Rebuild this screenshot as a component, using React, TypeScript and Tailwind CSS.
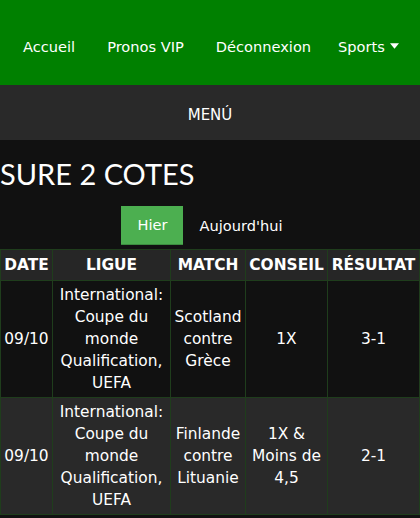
import React from 'react';

type Pick = {
  date: string;
  league: string;
  match: string;
  tip: string;
  result: string;
};

const PICKS: Pick[] = [
  {
    date: '09/10',
    league: 'International: Coupe du monde Qualification, UEFA',
    match: 'Scotland contre Grèce',
    tip: '1X',
    result: '3-1'
  },
  {
    date: '09/10',
    league: 'International: Coupe du monde Qualification, UEFA',
    match: 'Finlande contre Lituanie',
    tip: '1X & Moins de 4,5',
    result: '2-1'
  }
];

const NAV_LINKS = ['Accueil', 'Pronos VIP', 'Déconnexion'];

const CaretDown: React.FC = () => (
  <svg viewBox="0 0 10 6" className="ml-[5px] h-[6px] w-[9px]" aria-hidden="true" fill="currentColor">
    <path d="M0 0h10L5 6z" />
  </svg>
);

const CELL = 'border border-[#1f3d1c] px-[2px] text-center align-middle leading-[22px] text-[15.4px]';

export default function App() {
  return (
    <div className="min-h-[518px] bg-[#111111] text-white font-['DejaVu_Sans',sans-serif] text-[14px]">
      <nav className="flex h-[85px] items-center bg-[#008000] pl-[7px] pt-[8px]">
        {NAV_LINKS.map(link => (
          <a key={link} className="px-4 text-[14.6px]">
            {link}
          </a>
        ))}
        <a className="flex items-center pl-[11px] text-[14.6px]">
          Sports
          <CaretDown />
        </a>
      </nav>

      <div className="flex h-[55px] items-center justify-center bg-[#292929] pt-[6px] text-[15px]">MENÚ</div>

      <h1 className="pt-[14px] font-['Lato',sans-serif] text-[29px] leading-[40px]">SURE 2 COTES</h1>

      <div className="mt-[12px] flex justify-center">
        <button className="h-[39px] border-b border-[#3c8d40] bg-[#4caf50] px-4 text-[14.6px] text-white">Hier</button>
        <button className="h-[39px] px-4 text-[14.6px] text-white">Aujourd'hui</button>
      </div>

      <table className="mt-[4px] w-[419px] table-fixed border-collapse">
        <colgroup>
          <col className="w-[52px]" />
          <col className="w-[118px]" />
          <col className="w-[75px]" />
          <col className="w-[82px]" />
          <col className="w-[92px]" />
        </colgroup>
        <thead>
          <tr className="bg-[#262626] font-bold">
            <th className={`${CELL} py-1`}>DATE</th>
            <th className={`${CELL} py-1`}>LIGUE</th>
            <th className={`${CELL} py-1`}>MATCH</th>
            <th className={`${CELL} py-1`}>CONSEIL</th>
            <th className={`${CELL} py-1`}>RÉSULTAT</th>
          </tr>
        </thead>
        <tbody>
          {PICKS.map((pick, i) => (
            <tr key={i} className={i % 2 === 1 ? 'bg-[#292929]' : 'bg-[#111111]'}>
              <td className={`${CELL} py-[3px]`}>{pick.date}</td>
              <td className={`${CELL} py-[3px]`}>{pick.league}</td>
              <td className={`${CELL} py-[3px]`}>{pick.match}</td>
              <td className={`${CELL} py-[3px]`}>{pick.tip}</td>
              <td className={`${CELL} py-[3px]`}>{pick.result}</td>
            </tr>
          ))}
        </tbody>
      </table>
    </div>
  );
}
